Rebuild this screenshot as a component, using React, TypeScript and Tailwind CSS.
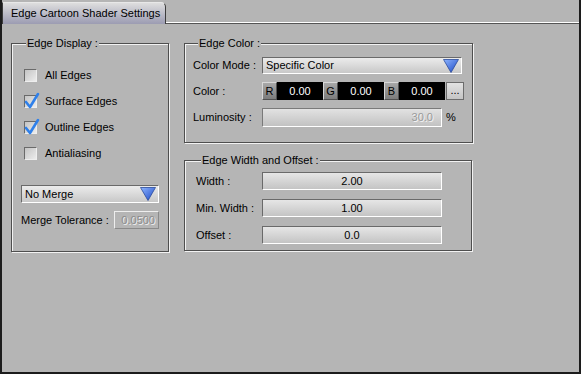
import type { ReactNode } from 'react';

const FONT = { fontFamily: '"Liberation Sans", Arial, sans-serif' };

function Arrow() {
  return (
    <svg width="16" height="14" viewBox="0 0 16 14">
      <defs>
        <linearGradient id="ag" x1="0" y1="0" x2="1" y2="1">
          <stop offset="0" stopColor="#8fb6ff" />
          <stop offset="1" stopColor="#1a46c4" />
        </linearGradient>
      </defs>
      <polygon points="0.5,0.5 15.5,0.5 8,13.5" fill="url(#ag)" stroke="#2a4a9a" strokeWidth="0.8" />
    </svg>
  );
}

function Check({ label, checked }: { label: string; checked?: boolean }) {
  return (
    <div className="flex items-center h-[13px] gap-[8px] ml-[3px]">
      <div className="relative w-[13px] h-[13px] border border-t-[#6a6a6a] border-l-[#6a6a6a] border-r-[#eeeeee] border-b-[#eeeeee] bg-gradient-to-br from-[#c4c4c4] to-[#ececec]">
        {checked && (
          <svg className="absolute left-[-1px] top-[-4px]" width="16" height="17" viewBox="0 0 16 17">
            <path d="M2 10 L6 15 L14 2" fill="none" stroke="#2f80ea" strokeWidth="2.6" strokeLinecap="round" strokeLinejoin="round" />
          </svg>
        )}
      </div>
      <span>{label}</span>
    </div>
  );
}

function Select({ value, className }: { value: string; className: string }) {
  return (
    <div className={`flex items-center justify-between pl-[3px] pr-[2px] border border-t-[#6a6a6a] border-l-[#6a6a6a] border-r-white border-b-white bg-gradient-to-b from-[#ececec] to-[#c8c8c8] ${className}`}>
      <span>{value}</span>
      <Arrow />
    </div>
  );
}

function Field({ value, className }: { value: string; className: string }) {
  return (
    <div className={`flex items-center justify-center border border-t-[#6a6a6a] border-l-[#6a6a6a] border-r-white border-b-white bg-gradient-to-b from-[#e6e6e6] to-[#c4c4c4] ${className}`}>
      {value}
    </div>
  );
}

function Group({ title, className, children }: { title: string; className: string; children: ReactNode }) {
  return (
    <fieldset className={`border border-[#4e4e4e] shadow-[1px_1px_0_#f2f2f2,inset_1px_1px_0_#f2f2f2] ${className}`}>
      <legend className="ml-[5px] px-[1px] leading-[14px] bg-[#b5b5b5]">{title}</legend>
      {children}
    </fieldset>
  );
}

function Chan({ letter, value }: { letter: string; value: string }) {
  return (
    <>
      <div className="w-[15px] h-full flex items-center justify-center border border-t-[#d8d8d8] border-l-[#d8d8d8] border-r-[#505050] border-b-[#505050] bg-gradient-to-b from-[#a8a8a8] to-[#7c7c7c]">
        {letter}
      </div>
      <div className="w-[46px] h-full flex items-center justify-center bg-black text-white">{value}</div>
    </>
  );
}

export default function App() {
  return (
    <div
      className="w-[581px] h-[374px] bg-[#b5b5b5] border-l-2 border-r-2 border-b-2 border-[#1c1c1c] flex flex-col text-[11px] text-black"
      style={FONT}
    >
      {/* tab bar */}
      <div className="flex items-end h-[24px] pt-[2px]">
        <div className="w-[164px] h-[22px] rounded-tr-[5px] border border-b-0 border-t-[#e8e8e8] border-l-[#3c3c3c] border-r-[#3c3c3c] bg-gradient-to-b from-[#dedede] to-[#9c9cb2] flex items-center pl-[8px] text-[11px] whitespace-nowrap">
          Edge Cartoon Shader Settings
        </div>
        <div className="flex-1 h-[2px] border-t border-white bg-[#555]" />
      </div>

      <div className="flex gap-[15px] pl-[9px] pt-[12px]">
        {/* left */}
        <Group title="Edge Display :" className="w-[158px] h-[216px] px-[9px] pt-[19px]">
          <div className="flex flex-col gap-[13px]">
            <Check label="All Edges" />
            <Check label="Surface Edges" checked />
            <Check label="Outline Edges" checked />
            <Check label="Antialiasing" />
          </div>
          <Select value="No Merge" className="w-[138px] h-[18px] mt-[25px]" />
          <div className="flex items-center justify-between mt-[8px] w-[138px]">
            <span>Merge Tolerance :</span>
            <div className="w-[45px] h-[18px] flex items-center justify-end pr-[3px] border border-t-[#eeeeee] border-l-[#eeeeee] border-r-[#8a8a8a] border-b-[#8a8a8a] text-[#8c8c8c] [text-shadow:1px_1px_0_#f0f0f0]">
              0.0500
            </div>
          </div>
        </Group>

        {/* right */}
        <div className="flex flex-col gap-[10px]">
          <Group title="Edge Color :" className="w-[288px] h-[107px] px-[8px] pt-[7px]">
            <div className="flex flex-col gap-[8px]">
              <div className="flex items-center">
                <span className="w-[69px]">Color Mode :</span>
                <Select value="Specific Color" className="w-[200px] h-[17px]" />
              </div>
              <div className="flex items-center h-[18px]">
                <span className="w-[69px]">Color :</span>
                <div className="flex items-center h-[18px]">
                  <Chan letter="R" value="0.00" />
                  <Chan letter="G" value="0.00" />
                  <Chan letter="B" value="0.00" />
                  <div className="ml-[1px] w-[18px] h-[18px] flex items-center justify-center border border-[#6c6c6c] bg-gradient-to-b from-[#e2e2e2] to-[#c4c4c4] leading-none pb-[2px]">
                    ...
                  </div>
                </div>
              </div>
              <div className="flex items-center">
                <span className="w-[69px]">Luminosity :</span>
                <div className="w-[180px] h-[19px] flex items-center justify-end pr-[8px] border border-t-[#7a7a7a] border-l-[#7a7a7a] border-r-white border-b-white bg-gradient-to-b from-[#e2e2e2] to-[#c2c2c2] text-[#9a9a9a] [text-shadow:1px_1px_0_#f4f4f4]">
                  30.0
                </div>
                <span className="ml-[4px]">%</span>
              </div>
            </div>
          </Group>

          <Group title="Edge Width and Offset :" className="w-[288px] h-[98px] pl-[11px] pt-[5px]">
            <div className="flex flex-col gap-[9px]">
              <div className="flex items-center">
                <span className="w-[66px]">Width :</span>
                <Field value="2.00" className="w-[180px] h-[18px]" />
              </div>
              <div className="flex items-center">
                <span className="w-[66px]">Min. Width :</span>
                <Field value="1.00" className="w-[180px] h-[18px]" />
              </div>
              <div className="flex items-center">
                <span className="w-[66px]">Offset :</span>
                <Field value="0.0" className="w-[180px] h-[18px]" />
              </div>
            </div>
          </Group>
        </div>
      </div>
    </div>
  );
}
